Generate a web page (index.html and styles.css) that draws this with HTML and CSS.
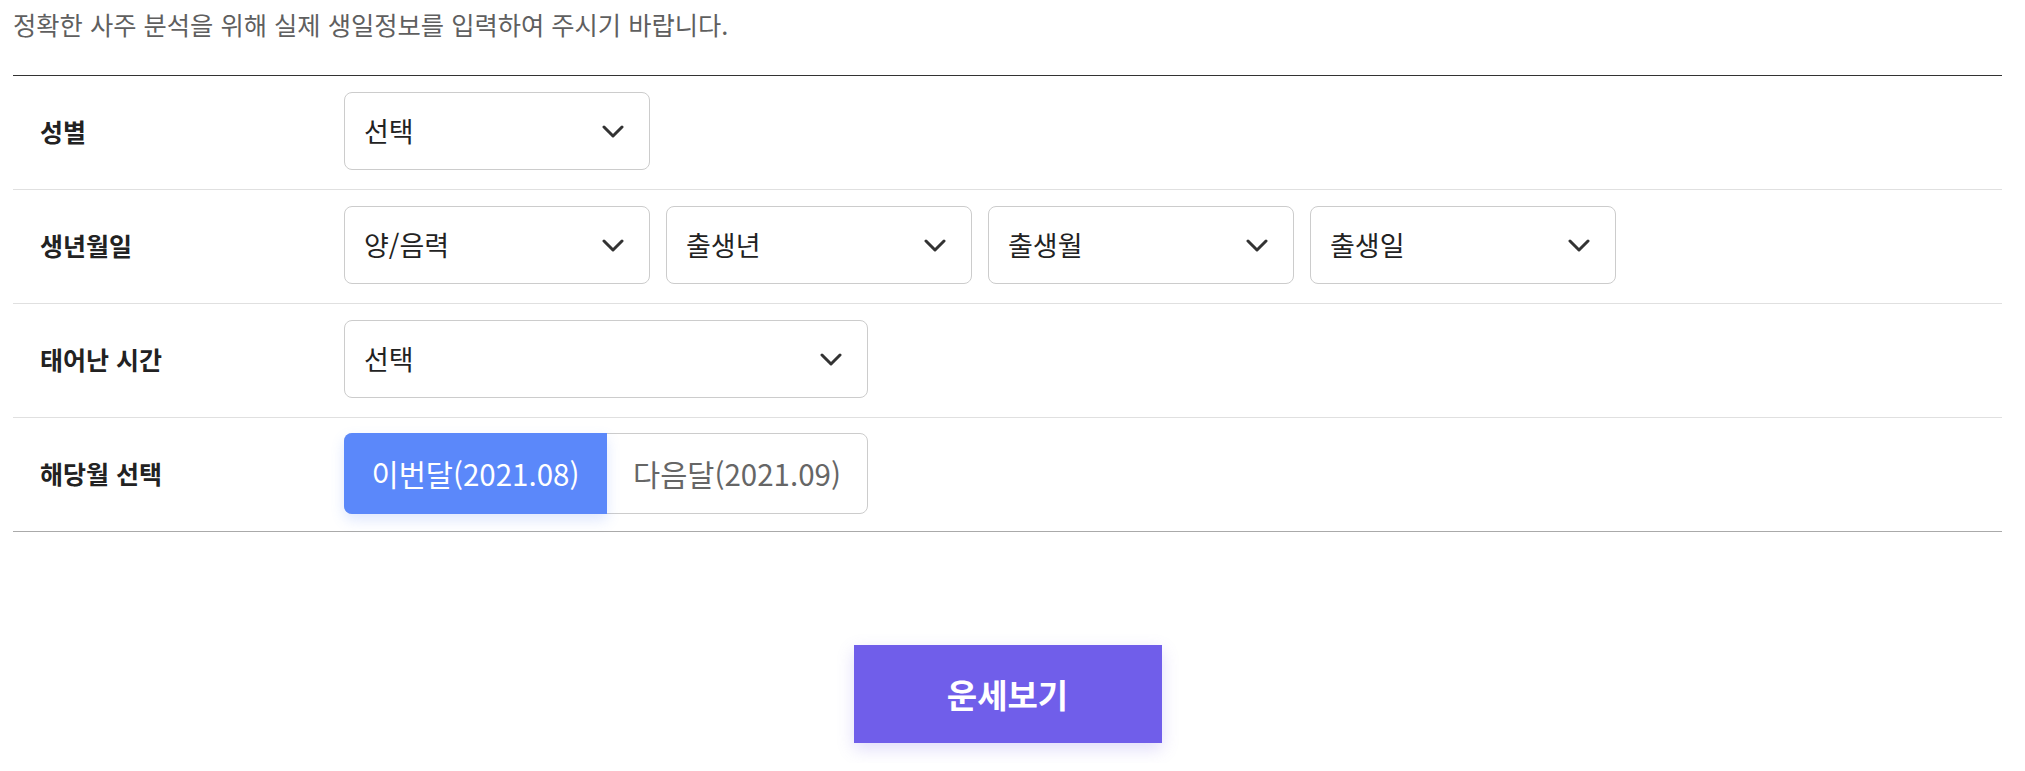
FILE: index.html
```html
<!DOCTYPE html>
<html lang="ko">
<head>
<meta charset="utf-8">
<title>사주 정보 입력</title>
<link rel="stylesheet" href="styles.css">
</head>
<body>
<div class="page">
  <p class="notice">정확한 사주 분석을 위해 실제 생일정보를 입력하여 주시기 바랍니다.</p>
  <div class="form">
    <div class="row">
      <div class="label">성별</div>
      <div class="fields">
        <div class="select"><span>선택</span><svg class="chev" viewBox="0 0 22 13" width="22" height="13"><polyline points="2,2 11,11 20,2"/></svg></div>
      </div>
    </div>
    <div class="row">
      <div class="label">생년월일</div>
      <div class="fields">
        <div class="select"><span>양/음력</span><svg class="chev" viewBox="0 0 22 13" width="22" height="13"><polyline points="2,2 11,11 20,2"/></svg></div>
        <div class="select"><span>출생년</span><svg class="chev" viewBox="0 0 22 13" width="22" height="13"><polyline points="2,2 11,11 20,2"/></svg></div>
        <div class="select"><span>출생월</span><svg class="chev" viewBox="0 0 22 13" width="22" height="13"><polyline points="2,2 11,11 20,2"/></svg></div>
        <div class="select"><span>출생일</span><svg class="chev" viewBox="0 0 22 13" width="22" height="13"><polyline points="2,2 11,11 20,2"/></svg></div>
      </div>
    </div>
    <div class="row">
      <div class="label">태어난 시간</div>
      <div class="fields">
        <div class="select select-wide"><span>선택</span><svg class="chev" viewBox="0 0 22 13" width="22" height="13"><polyline points="2,2 11,11 20,2"/></svg></div>
      </div>
    </div>
    <div class="row row-last">
      <div class="label">해당월 선택</div>
      <div class="fields">
        <div class="toggle">
          <div class="seg seg-active">이번달(2021.08)</div>
          <div class="seg">다음달(2021.09)</div>
        </div>
      </div>
    </div>
  </div>
  <div class="actions">
    <button class="submit" type="button">운세보기</button>
  </div>
</div>
</body>
</html>
```

FILE: styles.css
```css
html, body {
  margin: 0;
  padding: 0;
  background: #fff;
}

body {
  font-family: "Noto Sans CJK KR", "Noto Sans", sans-serif;
  color: #222;
}

.page {
  width: 1989px;
  margin-left: 13px;
}

.notice {
  margin: 0;
  padding-top: 7px;
  height: 75px;
  box-sizing: border-box;
  font-size: 25.3px;
  line-height: 34px;
  color: #5f5f5f;
  font-weight: 400;
}

.form {
  border-top: 1px solid #333;
  border-bottom: 1px solid #aaa;
}

.row {
  display: grid;
  grid-template-columns: 331px 1fr;
  align-items: center;
  height: 114px;
  box-sizing: border-box;
  padding-bottom: 3px;
  border-bottom: 1px solid #e0e0e0;
}

.row-last {
  height: 113px;
  border-bottom: none;
}

.label {
  padding-left: 27px;
  font-size: 25px;
  font-weight: 700;
  color: #222;
}

.fields {
  display: flex;
  gap: 16px;
}

.select {
  width: 306px;
  height: 78px;
  box-sizing: border-box;
  border: 1px solid #ccc;
  border-radius: 8px;
  display: flex;
  align-items: center;
  justify-content: space-between;
  padding: 0 25px 0 19px;
  font-size: 27px;
  color: #222;
  background: #fff;
}

.select span {
  margin-top: -2px;
}

.select-wide {
  width: 524px;
}

.chev {
  display: block;
  fill: none;
  stroke: #333;
  stroke-width: 3;
  stroke-linecap: round;
  stroke-linejoin: round;
}

.toggle {
  display: flex;
  width: 524px;
  height: 81px;
  box-sizing: border-box;
  border: 1px solid #ccc;
  border-radius: 8px;
}

.seg {
  flex: 1;
  display: flex;
  align-items: center;
  justify-content: center;
  font-size: 29.5px;
  color: #666;
}

.seg-active {
  flex: 0 0 263px;
  margin: -1px 0 -1px -1px;
  background: #5b88fa;
  color: #fff;
  border-radius: 8px 0 0 8px;
  box-shadow: 0 6px 14px rgba(91, 136, 250, 0.2);
  position: relative;
}

.actions {
  display: flex;
  justify-content: center;
  padding-top: 113px;
  padding-bottom: 20px;
}

.submit {
  width: 308px;
  height: 98px;
  border: none;
  background: #705eea;
  color: #fff;
  font-family: "Noto Sans CJK KR", "Noto Sans", sans-serif;
  font-size: 33px;
  font-weight: 700;
  box-shadow: 0 6px 16px rgba(112, 94, 234, 0.22);
  cursor: pointer;
}
```
